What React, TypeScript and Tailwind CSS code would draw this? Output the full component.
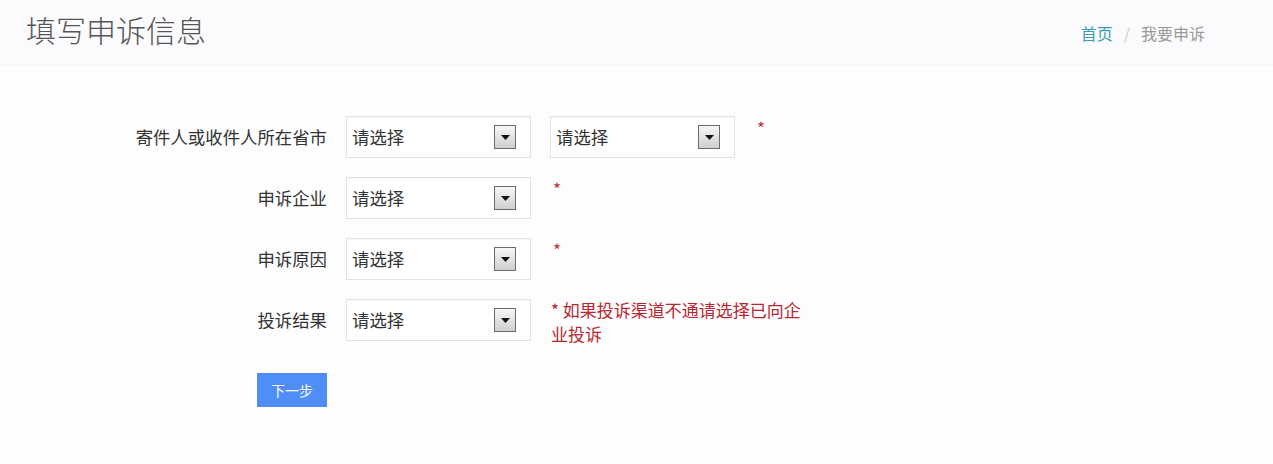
import React from "react";

const cjk = { fontFamily: '"Noto Sans CJK SC", "Liberation Sans", sans-serif' };

function FakeSelect() {
  return (
    <div className="flex h-[42px] w-[185px] items-center justify-between border border-[#e2e2e2] bg-white pl-[5px] pr-[14px] shadow-[inset_0_1px_1px_rgba(0,0,0,0.03)]">
      <span className="text-[17.4px] leading-none text-[#333]">请选择</span>
      <span className="flex h-[24px] w-[22px] items-center justify-center border border-[#6b6b6b] bg-gradient-to-b from-[#f7f7f7] to-[#cfcfcf]">
        <svg width="9" height="5" viewBox="0 0 9 5">
          <path d="M0 0 H9 L4.5 5 Z" fill="#111" />
        </svg>
      </span>
    </div>
  );
}

function Star() {
  return <span className="ml-[22px] text-[17px] leading-[24px] text-[#c0323c]">*</span>;
}

function Row({ label, children }: { label: string; children: React.ReactNode }) {
  return (
    <div className="flex items-start">
      <div className="flex h-[42px] w-[227px] items-center justify-end text-[17.4px] text-[#333]">{label}</div>
      <div className="ml-[19px] flex items-start">{children}</div>
    </div>
  );
}

export default function App() {
  return (
    <div className="min-h-screen bg-[#fefdfe]" style={cjk}>
      {/* header */}
      <div className="flex h-[66px] items-center justify-between border-b border-[#f4f4f6] bg-[#fbfbfd] pl-[26px] pr-[68px]">
        <h1 className="mt-[-8px] text-[30px] font-light leading-none text-[#555]">填写申诉信息</h1>
        <div className="flex items-center text-[16px]">
          <span className="text-[#3b9bb3]">首页</span>
          <span className="mx-[11px] text-[#ccc]">/</span>
          <span className="text-[#999]">我要申诉</span>
        </div>
      </div>

      {/* form */}
      <div className="mt-[50px] flex flex-col gap-[19px] pl-[100px]">
        <Row label="寄件人或收件人所在省市">
          <FakeSelect />
          <div className="ml-[19px]">
            <FakeSelect />
          </div>
          <Star />
        </Row>
        <Row label="申诉企业">
          <FakeSelect />
          <Star />
        </Row>
        <Row label="申诉原因">
          <FakeSelect />
          <Star />
        </Row>
        <Row label="投诉结果">
          <FakeSelect />
          <p className="ml-[20px] mt-[-1px] w-[264px] text-[17px] leading-[24px] text-[#b8262f]">
            * 如果投诉渠道不通请选择已向企业投诉
          </p>
        </Row>
      </div>

      <div className="mt-[27px] pl-[257px]">
        <button className="h-[34px] w-[70px] bg-[#4f8ef7] text-[14px] text-white">下一步</button>
      </div>
    </div>
  );
}
